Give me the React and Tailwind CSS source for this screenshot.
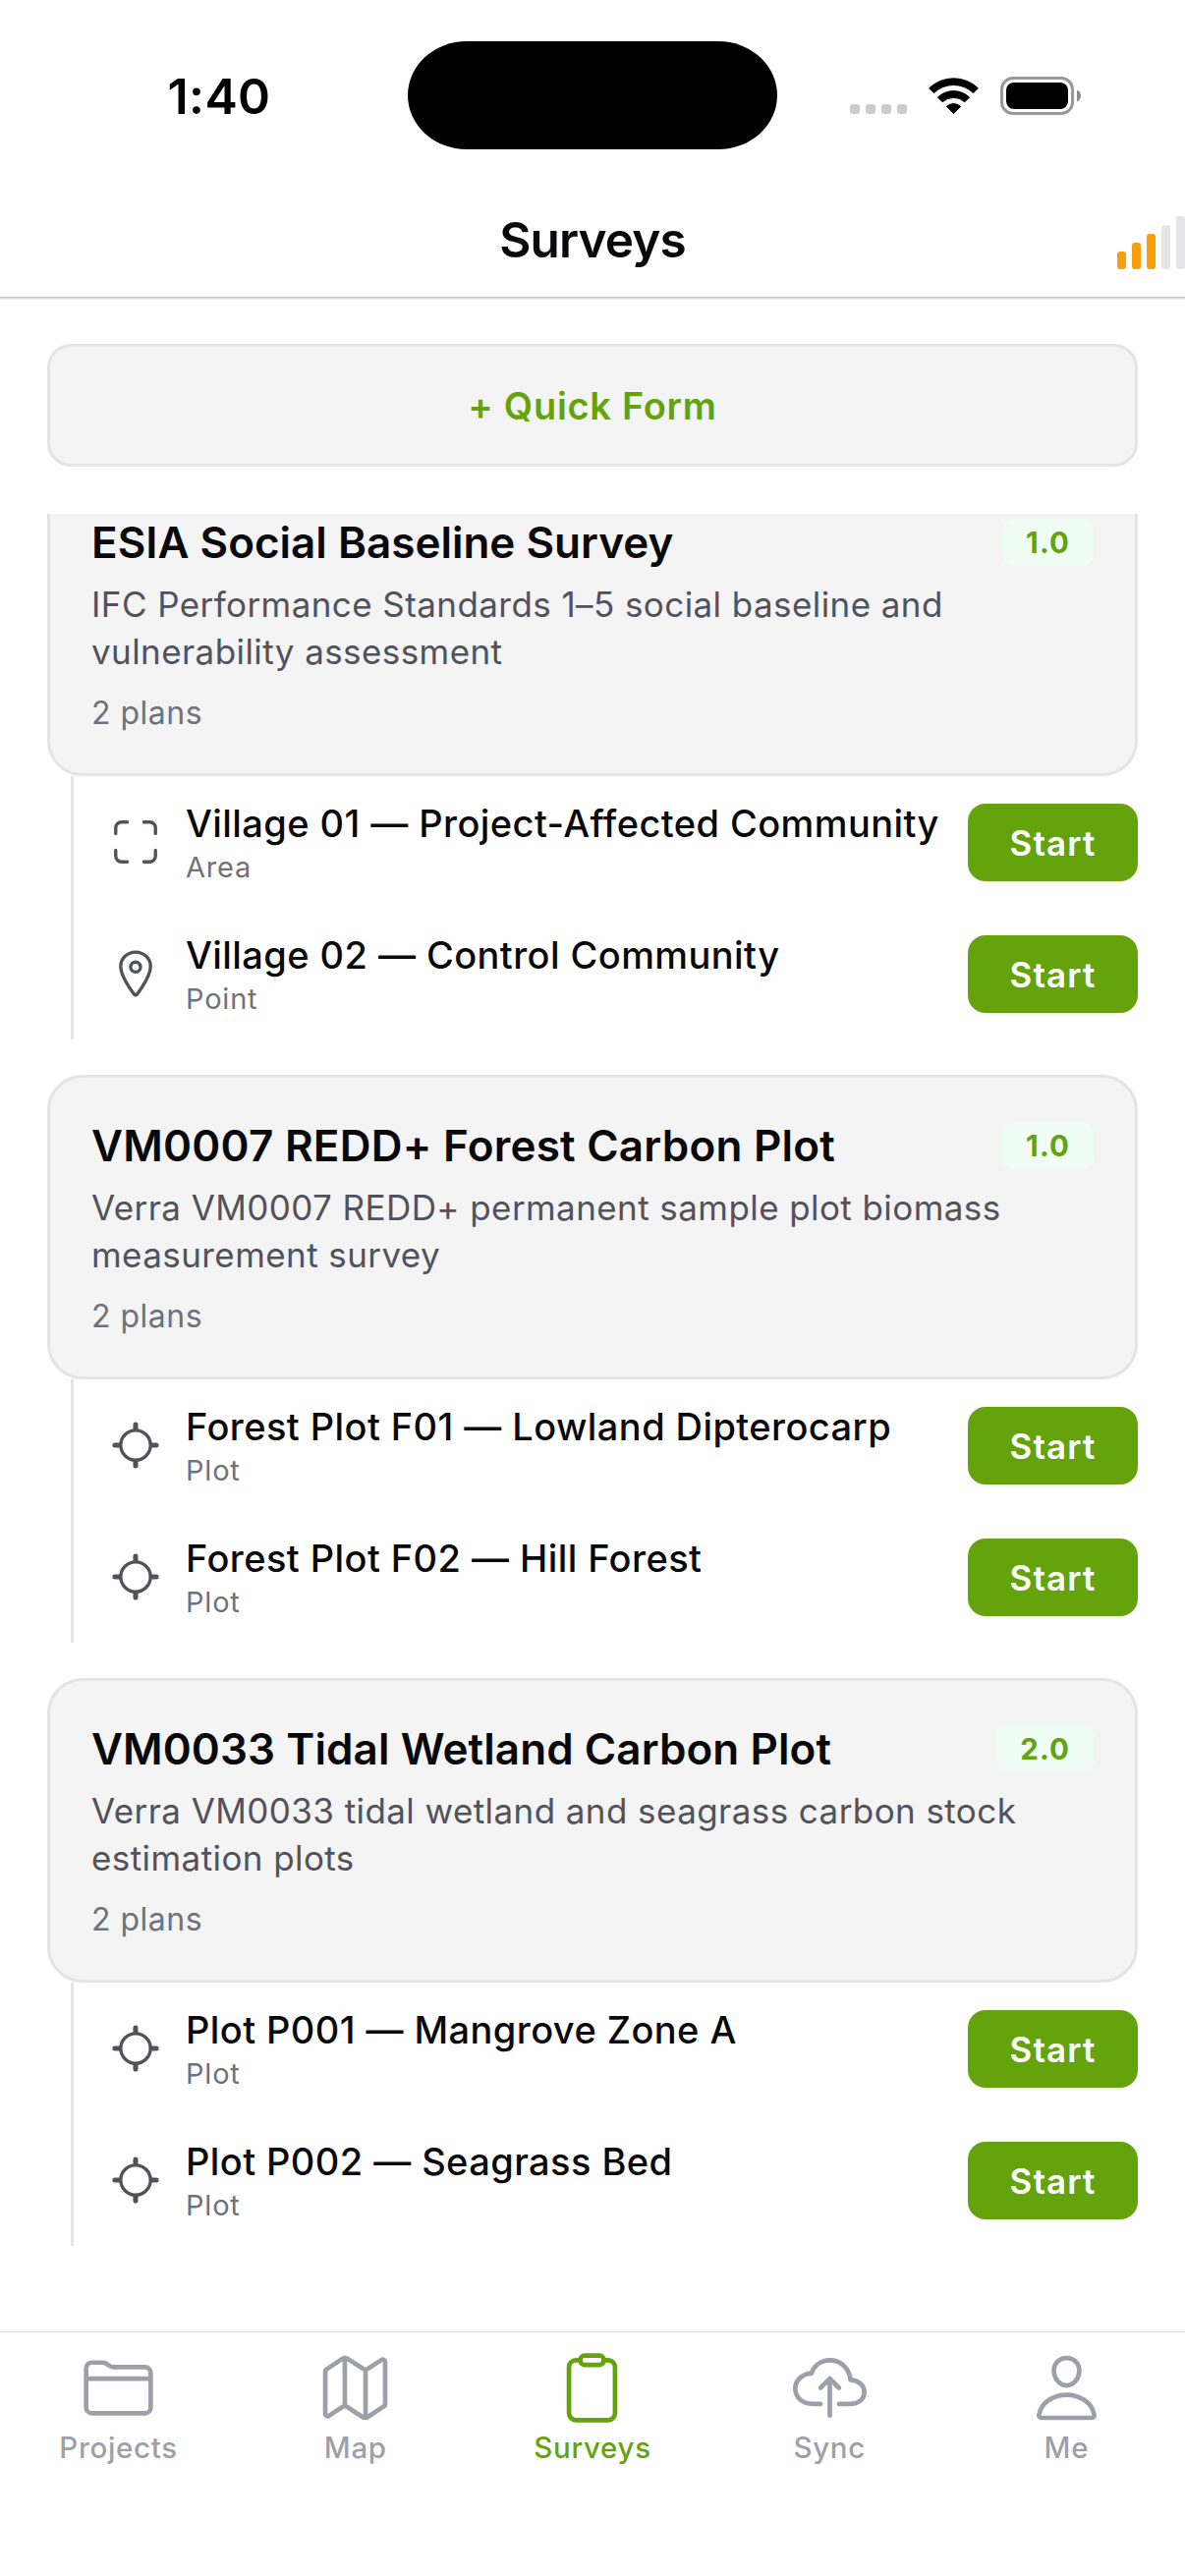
import {
  IoScanOutline,
  IoLocationOutline,
  IoLocateOutline,
  IoFolderOutline,
  IoMapOutline,
  IoClipboardOutline,
  IoCloudUploadOutline,
  IoPersonOutline,
} from "react-icons/io5";

const surveys = [
  {
    title: "ESIA Social Baseline Survey",
    titleTracking: "tracking-normal",
    version: "1.0",
    description: ["IFC Performance Standards 1–5 social baseline and", "vulnerability assessment"],
    plans: [
      { name: "Village 01 — Project-Affected Community", kind: "Area", icon: IoScanOutline },
      { name: "Village 02 — Control Community", kind: "Point", icon: IoLocationOutline },
    ],
  },
  {
    title: "VM0007 REDD+ Forest Carbon Plot",
    titleTracking: "tracking-[0.24px]",
    version: "1.0",
    description: ["Verra VM0007 REDD+ permanent sample plot biomass", "measurement survey"],
    plans: [
      { name: "Forest Plot F01 — Lowland Dipterocarp", kind: "Plot", icon: IoLocateOutline },
      { name: "Forest Plot F02 — Hill Forest", kind: "Plot", icon: IoLocateOutline },
    ],
  },
  {
    title: "VM0033 Tidal Wetland Carbon Plot",
    titleTracking: "tracking-[0.08px]",
    version: "2.0",
    description: ["Verra VM0033 tidal wetland and seagrass carbon stock", "estimation plots"],
    plans: [
      { name: "Plot P001 — Mangrove Zone A", kind: "Plot", icon: IoLocateOutline },
      { name: "Plot P002 — Seagrass Bed", kind: "Plot", icon: IoLocateOutline },
    ],
  },
];

const tabs = [
  { label: "Projects", icon: IoFolderOutline },
  { label: "Map", icon: IoMapOutline },
  { label: "Surveys", icon: IoClipboardOutline, active: true },
  { label: "Sync", icon: IoCloudUploadOutline },
  { label: "Me", icon: IoPersonOutline },
];

function WifiIcon() {
  return (
    <svg width="51" height="38" viewBox="0 0 51 38" className="block">
      <path d="M0.6 10.8 A36 36 0 0 1 50.4 10.8 L45.6 15.6 A29 29 0 0 0 5.4 15.6 Z" fill="#000" stroke="#000" strokeWidth="1" strokeLinejoin="round" />
      <path d="M9.4 20 A23.5 23.5 0 0 1 41.6 20 L36.8 24.8 A16.6 16.6 0 0 0 14.2 24.8 Z" fill="#000" stroke="#000" strokeWidth="1" strokeLinejoin="round" />
      <path d="M18.3 29.3 A11 11 0 0 1 32.7 29.3 L25.5 36.6 Z" fill="#000" stroke="#000" strokeWidth="1" strokeLinejoin="round" />
    </svg>
  );
}

function BatteryIcon() {
  return (
    <svg width="83" height="39" viewBox="0 0 83 39" className="block">
      <rect x="1.5" y="1.5" width="72" height="36" rx="11.5" fill="none" stroke="#999" strokeWidth="3" />
      <rect x="6" y="6" width="63" height="27" rx="8" fill="#000" />
      <path d="M78 13.5c2.4 1 4 3.2 4 6s-1.600 5-4 6z" fill="#8c8c8c" />
    </svg>
  );
}

function StatusBar() {
  return (
    <div className="grid h-[186px] grid-cols-[415px_376px_1fr] items-start">
      <div className="pt-[67px] pl-[170.5px] text-[50px] leading-[62px] font-semibold tracking-[0.4px] text-black">1:40</div>
      <div className="mt-[42px] h-[110px] rounded-[60px/55px] bg-black" />
      <div className="flex items-start pt-[78px] pl-[74px]">
        <div className="flex gap-1.5 pt-7">
          {[0, 1, 2, 3].map((n) => (
            <div key={n} className="size-2.5 rounded-[3px] bg-[#cbcbcb]" />
          ))}
        </div>
        <div className="ml-[22px] pt-px">
          <WifiIcon />
        </div>
        <div className="ml-[22px]">
          <BatteryIcon />
        </div>
      </div>
    </div>
  );
}

function Header() {
  return (
    <header className="grid h-[117px] grid-cols-[1fr_auto_1fr] items-center border-b border-[#c6c6c6] shadow-[0_1px_0_#dcdcdc,0_2px_0_#f0f0f0]">
      <div />
      <h1 className="text-[49.5px] leading-[60px] font-semibold tracking-[-0.9px] text-[#09090b]">Surveys</h1>
      <div className="flex items-end gap-1.5 justify-self-end pt-[6px]">
        <div className="h-[18px] w-[9px] rounded-[3px] bg-[#f99f0b]" />
        <div className="h-[27px] w-[9px] rounded-[3px] bg-[#f99f0b]" />
        <div className="h-9 w-[9px] rounded-[3px] bg-[#f99f0b]" />
        <div className="h-[45px] w-[9px] rounded-[3px] bg-zinc-200" />
        <div className="h-[54px] w-[9px] rounded-[3px] bg-zinc-200" />
      </div>
    </header>
  );
}

function PlanRow({ name, kind, icon: Icon }) {
  return (
    <div className="flex h-[134px] items-center gap-6 pl-9">
      <Icon className="size-[54px] shrink-0 text-zinc-600" />
      <div className="min-w-0 flex-1">
        <div className="text-[38px] leading-[48px] font-medium tracking-[0.42px] whitespace-nowrap text-[#09090b]">{name}</div>
        <div className="mt-[3px] text-[29px] leading-[35px] tracking-[0.8px] text-zinc-500">{kind}</div>
      </div>
      <button className="h-[79px] w-[173px] shrink-0 rounded-[18px] bg-[#65a30d] pt-0.5 text-[35px] leading-none font-semibold tracking-[1.1px] text-white">
        Start
      </button>
    </div>
  );
}

function SurveyGroup({ title, titleTracking, version, description, plans }) {
  return (
    <section>
      <div className="rounded-[36px] border-3 border-zinc-200 bg-zinc-100 p-[42px]">
        <div className="flex items-center justify-between">
          <h2 className={`text-[44px] leading-[54px] font-semibold whitespace-nowrap text-[#09090b] ${titleTracking}`}>{title}</h2>
          <span className="flex h-12 items-center rounded-xl bg-green-50 px-6 pt-0.5 text-[29.5px] leading-none font-bold tracking-[1.1px] text-[#65a30d]">
            {version}
          </span>
        </div>
        <p className="mt-3 text-[35px] leading-[48px] tracking-[0.42px] text-zinc-600">
          {description[0]}
          <br />
          {description[1]}
        </p>
        <p className="mt-[19px] -mb-px text-[32px] leading-[40px] tracking-[0.5px] text-zinc-500">{plans.length} plans</p>
      </div>
      <div className="ml-6 border-l-3 border-zinc-200">
        {plans.map((plan) => (
          <PlanRow key={plan.name} {...plan} />
        ))}
      </div>
    </section>
  );
}

function TabBar() {
  return (
    <nav className="grid h-[249px] shrink-0 grid-cols-5 items-start border-t border-[#dedee0] bg-white pt-[19px]">
      {tabs.map(({ label, icon: Icon, active }) => (
        <div key={label} className={`flex flex-col items-center ${active ? "text-[#65a30d]" : "text-zinc-400"}`}>
          <Icon className="size-[75px]" />
          <span className="mt-[5px] text-[29.5px] leading-[36px] font-medium tracking-[0.7px]">{label}</span>
        </div>
      ))}
    </nav>
  );
}

export default function App() {
  return (
    <div className="flex h-[2622px] w-[1206px] flex-col overflow-hidden bg-white font-['Inter',sans-serif]">
      <StatusBar />
      <Header />
      <div className="px-12 pt-[47px] pb-12">
        <button className="h-[125px] w-full rounded-3xl border-3 border-zinc-200 bg-zinc-100 text-[38px] leading-none font-semibold tracking-[0.7px] text-[#65a30d]">
          + Quick Form
        </button>
      </div>
      <main className="min-h-0 flex-1 overflow-hidden px-12">
        <div className="-mt-[43px] flex flex-col gap-9">
          {surveys.map((survey) => (
            <SurveyGroup key={survey.title} {...survey} />
          ))}
        </div>
      </main>
      <TabBar />
    </div>
  );
}
